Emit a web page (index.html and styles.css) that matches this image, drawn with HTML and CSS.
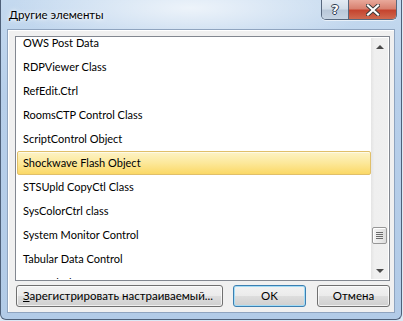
FILE: index.html
```html
<!DOCTYPE html>
<html>
<head>
<meta charset="utf-8">
<link rel="stylesheet" href="styles.css">
</head>
<body>
<div class="window">
  <div class="titlebar">
    <div class="title">Другие элементы</div>
    <div class="caption-buttons">
      <div class="cap-btn help">?</div>
      <div class="cap-btn close">
        <svg width="14" height="12" viewBox="0 0 14 12"><path d="M2 1.5 L12 10.5 M12 1.5 L2 10.5" stroke="#3a3a3a" stroke-width="4" stroke-linecap="square"/><path d="M2 1.5 L12 10.5 M12 1.5 L2 10.5" stroke="#ffffff" stroke-width="2.2" stroke-linecap="square"/></svg>
      </div>
    </div>
  </div>
  <div class="client">
    <div class="listbox">
      <div class="list">
        <div class="items">
          <div class="item">OWS Post Data</div>
          <div class="item">RDPViewer Class</div>
          <div class="item">RefEdit.Ctrl</div>
          <div class="item">RoomsCTP Control Class</div>
          <div class="item">ScriptControl Object</div>
          <div class="item selected">Shockwave Flash Object</div>
          <div class="item">STSUpld CopyCtl Class</div>
          <div class="item">SysColorCtrl class</div>
          <div class="item">System Monitor Control</div>
          <div class="item">Tabular Data Control</div>
          <div class="item">TDCCtl Class</div>
        </div>
      </div>
      <div class="scrollbar">
        <div class="arrow up"></div>
        <div class="track">
          <div class="thumb"><span></span><span></span><span></span><span></span></div>
        </div>
        <div class="arrow down"></div>
      </div>
    </div>
    <div class="buttons">
      <div class="btn register"><u>З</u>арегистрировать настраиваемый...</div>
      <div class="btn ok">OK</div>
      <div class="btn cancel">Отмена</div>
    </div>
  </div>
</div>
</body>
</html>
```

FILE: styles.css
```css
html, body {
  margin: 0;
  padding: 0;
  width: 403px;
  height: 321px;
  overflow: hidden;
  background: #dbe8f5;
  font-family: "Lato", "Open Sans", sans-serif;
}

.window {
  box-sizing: border-box;
  width: 402px;
  height: 320px;
  border: 1px solid #4e6079;
  border-top: none;
  border-radius: 0 0 6px 6px;
  background:
    radial-gradient(ellipse 180px 40px at 190px 8px, rgba(255,255,255,0.7), rgba(255,255,255,0) 100%),
    linear-gradient(180deg, #c4d9ef 0%, #b7cfea 30%, #b2cbe7 100%);
  display: flex;
  flex-direction: column;
}

.titlebar {
  height: 29px;
  display: flex;
  align-items: flex-start;
  flex: none;
}

.title {
  margin: 7px 0 0 8px;
  font-size: 11.5px;
  line-height: 16px;
  color: #000;
  text-shadow: 0 0 6px #fff, 0 0 3px #fff;
}

.caption-buttons {
  margin-left: auto;
  margin-right: 4px;
  display: flex;
  height: 19px;
  border: 1px solid #58687e;
  border-top: none;
  border-radius: 0 0 5px 5px;
  overflow: hidden;
  box-shadow: 0 1px 0 rgba(255,255,255,0.6);
}

.cap-btn {
  height: 19px;
  display: flex;
  align-items: center;
  justify-content: center;
}

.help {
  width: 26px;
  border-right: 1px solid #58687e;
  background: linear-gradient(180deg, #e3ebf4 0%, #d2dde9 45%, #b9c8d9 55%, #c6d4e3 100%);
  color: #fff;
  font-family: "DejaVu Sans", sans-serif;
  font-weight: bold;
  font-size: 13px;
  text-shadow: 1px 0 0 #2d3b4f, -1px 0 0 #2d3b4f, 0 1px 0 #2d3b4f, 0 -1px 0 #2d3b4f;
}

.close {
  width: 47px;
  background: linear-gradient(180deg, #e9a99b 0%, #d88170 45%, #c5442f 55%, #cf6a50 100%);
}

.client {
  flex: 1;
  margin: 0 6px 6px 6px;
  border: 1px solid #8fa4bf;
  box-shadow: inset 1px 1px 0 #fff;
  background: #f0f0f0;
  padding: 6px 4px 5px 7px;
  display: flex;
  flex-direction: column;
}

.listbox {
  height: 245px;
  box-sizing: border-box;
  border: 1px solid #828790;
  background: #fff;
  display: flex;
  padding: 1px 1px 1px 0;
}

.list {
  flex: 1;
  overflow: hidden;
}

.items {
  margin-top: -7px;
  padding-left: 1px;
}

.item {
  height: 24px;
  line-height: 22px;
  box-sizing: border-box;
  border: 1px solid transparent;
  padding-left: 5px;
  font-size: 11px;
  color: #000;
  white-space: nowrap;
}

.item.selected {
  border-color: #e0bf6a;
  border-radius: 2px;
  background: linear-gradient(180deg, #fdf3c6 0%, #fce89a 50%, #fbd866 100%);
  box-shadow: inset 0 1px 0 rgba(255,255,255,0.6);
}

.scrollbar {
  width: 17px;
  background: linear-gradient(90deg, #e4e4e4 0%, #efefef 20%, #f0f0f0 100%);
  display: flex;
  flex-direction: column;
}

.arrow {
  height: 17px;
  display: flex;
  align-items: center;
  justify-content: center;
}

.arrow::before {
  content: "";
  width: 0;
  height: 0;
  border-left: 4px solid transparent;
  border-right: 4px solid transparent;
}

.arrow.up::before {
  border-bottom: 4px solid #4a4a4a;
}

.arrow.down::before {
  border-top: 4px solid #4a4a4a;
}

.track {
  flex: 1;
  display: flex;
  flex-direction: column;
  justify-content: flex-end;
  padding-bottom: 18px;
}

.thumb {
  height: 17px;
  box-sizing: border-box;
  margin: 0 1px 0 1px;
  border: 1px solid #979797;
  border-radius: 2px;
  background: linear-gradient(90deg, #f4f4f4 0%, #e8e8e8 60%, #dcdcdc 100%);
  box-shadow: inset 1px 1px 0 #fff;
  display: flex;
  flex-direction: column;
  justify-content: center;
  align-items: center;
  gap: 1px;
}

.thumb span {
  width: 7px;
  height: 1px;
  background: #6b6b6b;
}

.buttons {
  display: flex;
  margin-top: 4px;
  padding-left: 1px;
}

.btn {
  box-sizing: border-box;
  height: 22px;
  border: 1px solid #707070;
  border-radius: 3px;
  background: linear-gradient(180deg, #f2f2f2 0%, #ebebeb 48%, #dddddd 52%, #cfcfcf 100%);
  box-shadow: inset 0 0 0 1px rgba(255,255,255,0.7);
  font-size: 11.5px;
  line-height: 20px;
  color: #000;
  text-align: center;
  white-space: nowrap;
}

.btn u {
  text-decoration: underline;
}

.register {
  width: 207px;
  text-align: left;
  padding-left: 6px;
}

.ok {
  width: 73px;
  margin-left: 10px;
  border-color: #3c7fb1;
  box-shadow: inset 0 0 0 1px #a4dcf6;
}

.cancel {
  width: 73px;
  margin-left: 11px;
}
```
